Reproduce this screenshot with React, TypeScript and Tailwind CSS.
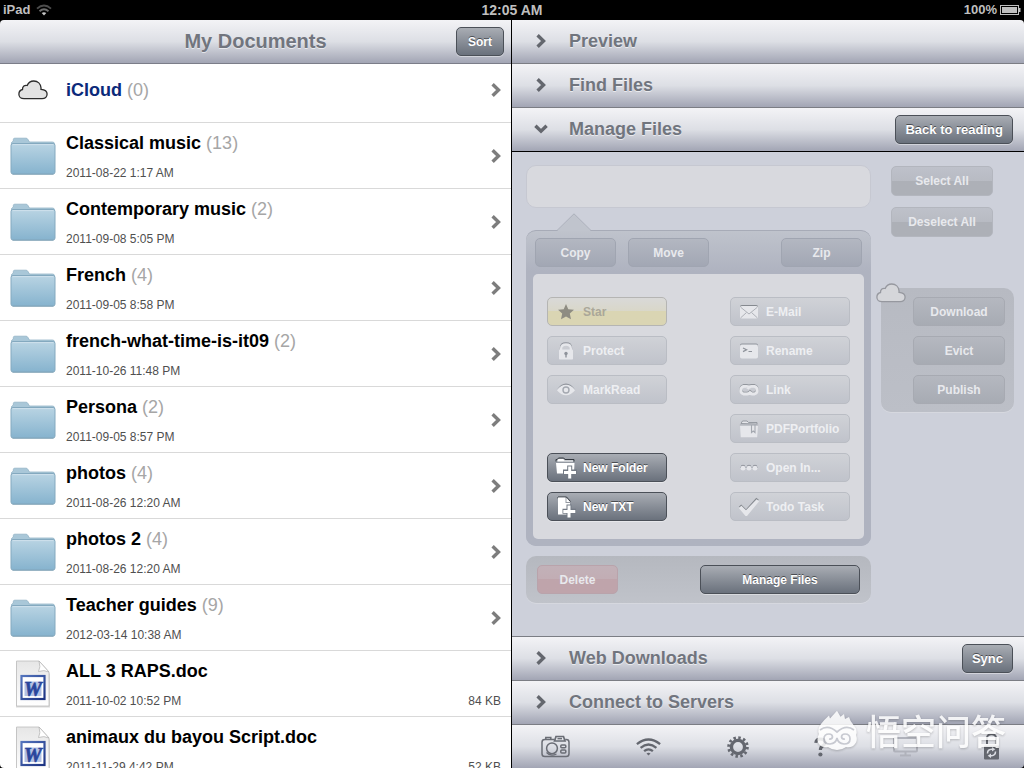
import type { ReactNode } from 'react';
import clsx from 'clsx';

type Entry = {
  name: string;
  date: string;
  count?: number;
  size?: string;
};

const entries: Entry[] = [
  { name: 'Classical music', count: 13, date: '2011-08-22 1:17 AM' },
  { name: 'Contemporary music', count: 2, date: '2011-09-08 5:05 PM' },
  { name: 'French', count: 4, date: '2011-09-05 8:58 PM' },
  { name: 'french-what-time-is-it09', count: 2, date: '2011-10-26 11:48 PM' },
  { name: 'Persona', count: 2, date: '2011-09-05 8:57 PM' },
  { name: 'photos', count: 4, date: '2011-08-26 12:20 AM' },
  { name: 'photos 2', count: 4, date: '2011-08-26 12:20 AM' },
  { name: 'Teacher guides', count: 9, date: '2012-03-14 10:38 AM' },
  { name: 'ALL 3 RAPS.doc', size: '84 KB', date: '2011-10-02 10:52 PM' },
  { name: 'animaux du bayou Script.doc', size: '52 KB', date: '2011-11-29 4:42 PM' },
];

const barBg = 'bg-linear-to-b from-[#f3f3f6] via-[#dddfe5] via-50% to-[#a2a5b4]';
const darkBtn =
  'rounded-[5px] border border-[#4b5058] bg-linear-to-b from-[#a9adb4] to-[#6a717c] font-bold text-white shadow-[0_1px_0_rgba(255,255,255,0.4)] [text-shadow:0_-1px_0_rgba(0,0,0,0.5)]';

/* ---------- icons ---------- */

function ChevronRight({ className }: { className?: string }) {
  return (
    <svg viewBox="0 0 10 14" className={clsx('h-3.5 w-2.5 shrink-0', className)} fill="none" stroke="currentColor" strokeWidth="3.4">
      <path d="M1.600 1.300 7.500 7l-5.900 5.700" />
    </svg>
  );
}

function ChevronDown() {
  return (
    <svg viewBox="0 0 14 10" className="h-2.5 w-3.5 shrink-0" fill="none" stroke="currentColor" strokeWidth="3.4">
      <path d="M1.4 1.8 7 7.2l5.6-5.4" />
    </svg>
  );
}

function Cloud({ className, stroke, fill }: { className: string; stroke: string; fill: string }) {
  return (
    <svg viewBox="0 0 30 20" className={className}>
      <path
        d="M6 18.7C3 18.7.9 16.8.9 14.2c0-2.400 1.500-4.200 3.600-4.700C4.300 6.500 6.700 4.700 9.200 5.500 10.300 2.800 12.800 1 15.800 1c4 0 6.900 2.900 7.200 6.800.1.600 0 1.100 0 1.500 3.400.2 6.100 1.900 6.100 4.800 0 2.700-2.100 4.600-5 4.600Z"
        fill={fill}
        stroke={stroke}
        strokeWidth="1.3"
      />
    </svg>
  );
}

function FolderIcon() {
  return (
    <svg viewBox="0 0 46 38" className="h-[38px] w-[46px]">
      <defs>
        <linearGradient id="folderFront" x1="0" y1="0" x2="0" y2="1">
          <stop offset="0" stopColor="#b9d4e3" />
          <stop offset="1" stopColor="#86b3ce" />
        </linearGradient>
      </defs>
      <path d="M1.500 9V5.500L3.300 4V2.600Q3.300 1.200 4.800 1.200H16q1.200 0 1.700.9L19.500 5H42.500q2 0 2 2v2Z" fill="#a9c7d8" stroke="#93b4c7" strokeWidth=".8" />
      <path d="M1 8.500Q1 6.500 3 6.500H43q2 0 2 2V35q0 2-2 2H3Q1 37 1 35Z" fill="url(#folderFront)" stroke="#84a9bf" strokeWidth="1" />
      <path d="M2.500 7.600h41" stroke="#cfe1ec" strokeWidth="1" />
      <path d="M2.500 37.400h41" stroke="#7497ab" strokeWidth=".6" />
    </svg>
  );
}

function WordIcon() {
  return (
    <svg viewBox="0 0 38 50" className="h-[50px] w-[38px]">
      <defs>
        <linearGradient id="page" x1="0" y1="0" x2="0" y2="1">
          <stop offset="0" stopColor="#e6e6e6" />
          <stop offset="1" stopColor="#ffffff" />
        </linearGradient>
        <linearGradient id="wordBox" x1="0" y1="0" x2="1" y2="1">
          <stop offset="0" stopColor="#5474bd" />
          <stop offset="1" stopColor="#1c3382" />
        </linearGradient>
      </defs>
      <path d="M2 3.500H26l10 11.500V48.500H2Z" fill="#d9d9d9" />
      <path d="M2.500 2H25l10 11v34H2.500Z" fill="url(#page)" stroke="#bdbdbd" strokeWidth=".8" />
      <path d="M25 2q2 6-.5 10.500Q30 10.500 35 13Z" fill="#fff" stroke="#b0b0b0" strokeWidth=".7" />
      <rect x="7.500" y="17" width="23" height="23" fill="#fff" stroke="url(#wordBox)" strokeWidth="2.200" />
      <path d="M10.500 22.500h17v14.500h-17Z" fill="#b3c1e3" />
      <text x="19" y="36.500" textAnchor="middle" fontFamily="Liberation Serif, serif" fontSize="20" fontWeight="700" fontStyle="italic" fill="#2a469c" stroke="#2a469c" strokeWidth=".7">
        W
      </text>
    </svg>
  );
}

function StarIcon() {
  return (
    <svg viewBox="0 0 20 20" className="size-5" fill="#8e8c82">
      <path d="m10 2 2.300 5.200 5.700.6-4.200 3.800 1.200 5.600L10 14.400l-5 2.800 1.200-5.600L2 7.800l5.700-.6Z" />
    </svg>
  );
}

function LockIcon() {
  return (
    <svg viewBox="0 0 20 20" className="size-5">
      <path d="M5 9V6.500Q5 2.300 10 2.300t5 4.200V9" fill="none" stroke="#8f939b" strokeWidth="2.200" />
      <path d="M5.200 9.500V7.500Q5.200 3.500 10 3.500t4.800 4v2" fill="none" stroke="#e6e7eb" strokeWidth="2.400" />
      <rect x="3" y="8.500" width="14" height="10" rx=".8" fill="#e6e7eb" />
      <circle cx="10" cy="12.500" r="1.700" fill="#8f939b" />
      <path d="M9.300 13h1.400v3.500H9.300Z" fill="#8f939b" />
    </svg>
  );
}

function EyeIcon() {
  return (
    <svg viewBox="0 0 20 20" className="size-5">
      <path d="M.8 10Q5 3.600 10 3.600T19.200 10Q15 5.400 10 5.400T.8 10Z" fill="#8f939b" />
      <path d="M1 10.200Q5 4.800 10 4.800t9 5.400Q15 15.200 10 15.200T1 10.200Z" fill="#e6e7eb" />
      <circle cx="10" cy="10" r="3" fill="none" stroke="#a4a8b0" strokeWidth="1.400" />
    </svg>
  );
}

function NewFolderIcon() {
  return (
    <svg viewBox="0 0 22 22" className="size-[22px]">
      <path d="M1 4.500V2.500h1.200L3.500 1h5.200L10 2.500h9v2" fill="none" stroke="#33383f" strokeWidth="1" />
      <path d="M2.500 4.500V3l1-1h4.800l1.200 1.400H18v1.100Z" fill="#fff" />
      <path d="M1 6h18.500l-.5 10.500H2Z" fill="#fff" />
      <path d="M14.700 8.500V22M8 15h14" stroke="#737a84" strokeWidth="5" />
      <path d="M14.700 9.500v12M9 15.500h12" stroke="#fff" strokeWidth="3" />
    </svg>
  );
}

function NewFileIcon() {
  return (
    <svg viewBox="0 0 22 22" className="size-[22px]">
      <path d="M3 2.500V1h8.500l4 4.500" fill="none" stroke="#33383f" strokeWidth="1" />
      <path d="M3 1.600h7.500V7H15v11.500H3Z" fill="#fff" />
      <path d="m11.500 2 3.700 4h-3.700Z" fill="#fff" />
      <path d="M14 8.500V22M7.500 15.200H21" stroke="#737a84" strokeWidth="5" />
      <path d="M14 9.500v12M8.300 15.500h12" stroke="#fff" strokeWidth="3" />
    </svg>
  );
}

function MailIcon() {
  return (
    <svg viewBox="0 0 20 20" className="size-5">
      <rect x="1" y="3" width="18" height="13" rx="1.800" fill="#85898f" />
      <rect x="1" y="4" width="18" height="12.500" rx="1.800" fill="#e6e7eb" />
      <path d="m2 5.500 8 6.500 8-6.500M2 15.500l5.500-5M18 15.500l-5.500-5" fill="none" stroke="#aeb1b8" strokeWidth="1" />
    </svg>
  );
}

function RenameIcon() {
  return (
    <svg viewBox="0 0 20 20" className="size-5">
      <rect x="1" y="2.500" width="18" height="14" rx="1.800" fill="#8f939b" />
      <rect x="1" y="3.600" width="18" height="14" rx="1.800" fill="#e6e7eb" />
      <path d="m4 7 3.600 1.800L4 10.600M9.500 10.500h3.500" fill="none" stroke="#8f939b" strokeWidth="1.200" />
    </svg>
  );
}

function LinkIcon() {
  const chain =
    'M13 11.500q-1.500 2.500-4 2.500H5.500a4 4 0 0 1 0-7.600h3q2.500 0 3 2.200M9.500 9q1.300-2.600 4-2.600h3a4 4 0 0 1 0 7.600h-2.300q-2.200 0-3-2.200';
  return (
    <svg viewBox="0 0 22 20" className="h-5 w-[22px]" fill="none">
      <path d={chain} transform="translate(0 -1)" stroke="#92969d" strokeWidth="2.600" />
      <path d={chain} stroke="#e6e7eb" strokeWidth="2.800" />
    </svg>
  );
}

function PortfolioIcon() {
  return (
    <svg viewBox="0 0 20 20" className="size-5">
      <path d="M2 4.500 3.500 2H8l1.500 1.500H18V5Z" fill="#e6e7eb" stroke="#8f939b" strokeWidth=".9" />
      <path d="M1 6.200h18l-.8 12H1.800Z" fill="#e6e7eb" />
      <path d="M.8 6h18.400" stroke="#a4a8b0" strokeWidth="1" />
      <path d="M12.500 6v7.500l1.700-1.500 1.800 1.500V6" fill="none" stroke="#a4a8b0" strokeWidth="1.100" />
    </svg>
  );
}

function DotsIcon() {
  return (
    <svg viewBox="0 0 20 20" className="size-5">
      {[4, 10, 16].map((x) => (
        <g key={x}>
          <circle cx={x} cy="9.200" r="2.400" fill="#8f939b" />
          <circle cx={x} cy="10.200" r="2.400" fill="#e6e7eb" />
        </g>
      ))}
    </svg>
  );
}

function CheckIcon() {
  return (
    <svg viewBox="0 0 22 20" className="h-5 w-[22px]">
      <path d="M.8 9.800 3.200 7.600 8 12.300 18.300.8l2.500 2L8.500 17.500Z" fill="#85898f" />
      <path d="M.8 11 3.400 8.800 8 13.300 18.600 2.200l2.600 2L9 19H7.500Z" fill="#e6e7eb" />
    </svg>
  );
}

function StatusWifi() {
  return (
    <svg viewBox="0 0 16 12" className="h-3 w-4" fill="none" strokeWidth="1.900">
      <path d="M1 4.600Q8-1.800 15 4.600" stroke="#4d4d4d" />
      <path d="M3.500 7.200Q8 3.200 12.500 7.200" stroke="#6e6e6e" />
      <path d="m8 11.500-2.300-2.400q2.300-1.800 4.600 0Z" fill="#c8c8c8" />
    </svg>
  );
}

function CameraIcon() {
  return (
    <svg viewBox="0 0 29 23" className="h-[23px] w-[29px]" fill="none" stroke="#6a6d75" strokeWidth="1.500">
      <path d="M4.800 4.500V2.500h5v2" />
      <path d="M13.500 4.500H3.800Q1 4.500 1 7.200v11.500q0 2.800 2.800 2.800h21.400q2.800 0 2.800-2.800V7.200q0-2.700-2.800-2.700h-1" />
      <path d="m13.500 6 1.500-4.500h7.500L24 6Z" strokeWidth="1.700" />
      <path d="M16.500 3.600h4.500" />
      <circle cx="11" cy="13.300" r="5.400" />
      <path d="M5.500 17.500q4 4.500 10 1.500" strokeWidth="1.200" />
      <rect x="19.800" y="10" width="5" height="2.800" rx="1" />
      <rect x="19.800" y="15" width="5" height="3" rx="1" />
    </svg>
  );
}

function WifiIcon() {
  return (
    <svg viewBox="0 0 25 18" className="h-[18px] w-[25px]" fill="none" stroke="#64676f" strokeWidth="2.300">
      <path d="M.9 6.200Q12.500-3.200 24.100 6.200" />
      <path d="M4.600 9.800q7.900-6.600 15.800 0" />
      <path d="M8.100 13.200q4.400-3.600 8.800 0" />
      <path d="m12.500 17.500-2-1.900q2-1.500 4 0Z" fill="#64676f" stroke="none" />
    </svg>
  );
}

function GearIcon() {
  return (
    <svg viewBox="0 0 22 22" className="size-[22px]" fill="none" stroke="#64676f">
      <circle cx="11" cy="11" r="6.600" strokeWidth="3.400" />
      <circle cx="11" cy="11" r="9.400" strokeWidth="2.800" strokeDasharray="2.500 2.422" />
    </svg>
  );
}

function HelpIcon() {
  return (
    <svg viewBox="0 0 13 20" className="h-5 w-[13px]">
      <path d="M1.800 5.800Q2.200 2 6.500 2t4.600 3.500q0 2-2.500 3.500Q6.400 10.200 6.400 13" fill="none" stroke="#64676f" strokeWidth="3.200" />
      <circle cx="6.400" cy="17.500" r="2.100" fill="#64676f" />
    </svg>
  );
}

function MonitorIcon() {
  return (
    <svg viewBox="0 0 25 21" className="h-[21px] w-[25px]" fill="none" stroke="#b0b2bb" strokeWidth="2">
      <rect x="1" y="2" width="23" height="13.500" rx="1" />
      <path d="M12.500 15.500v3.500M7 19.500h11" />
    </svg>
  );
}

function SyncLockIcon() {
  return (
    <svg viewBox="0 0 15 27" className="h-[27px] w-[15px]" fill="none">
      <path d="M3 11V5q0-3.800 4.500-3.800T12 5v6" stroke="#64676f" strokeWidth="2" />
      <rect y="12.500" width="15" height="14" rx="1" fill="#64676f" />
      <path d="M3.500 20.500q0-4 4-4.200h1M11.500 18.500q0 4-4 4.200h-1" stroke="#dcdee4" strokeWidth="1.500" />
      <path d="m8 14 3.300 2.300L8 18.600ZM7 20.400l-3.300 2.300L7 25Z" fill="#dcdee4" />
    </svg>
  );
}

/* ---------- pieces ---------- */

type BarProps = { title: string; open?: boolean; children?: ReactNode; className?: string };

function SectionBar({ title, open, children, className }: BarProps) {
  return (
    <div className={clsx('flex h-11 shrink-0 items-center pr-[11px]', barBg, className)}>
      <button
        type="button"
        aria-expanded={!!open}
        className="flex flex-1 items-center gap-[21px] pb-0.5 pl-[22px] text-left text-[18px] leading-6 font-bold text-[#71757e] [text-shadow:0_1px_0_rgba(255,255,255,0.6)]"
      >
        <span className="flex w-3.5 justify-center text-[#64676e]">{open ? <ChevronDown /> : <ChevronRight />}</span>
        {title}
      </button>
      {children}
    </div>
  );
}

function ToolButton({ icon, label, active }: { icon: ReactNode; label: string; active?: boolean }) {
  return (
    <button
      type="button"
      disabled={!active}
      className={clsx(
        'flex h-[29px] w-[120px] items-center gap-1.5 pl-[7px] text-xs',
        active
          ? darkBtn
          : 'rounded-[5px] border border-[#babdc4] bg-linear-to-b from-[#d0d2d7] to-[#c0c3cb] font-bold text-[#eeeff2]'
      )}
    >
      <span className="flex w-[22px] justify-center">{icon}</span>
      {label}
    </button>
  );
}

function FadedButton({ label, className }: { label: string; className: string }) {
  return (
    <button type="button" disabled className={clsx('rounded-[5px] border text-xs font-bold text-[#e8e9ed]', className)}>
      {label}
    </button>
  );
}

const slate = 'h-[29px] w-[81px] border-[#a0a5b1] bg-linear-to-b from-[#b3b7c1] to-[#a2a7b4]';
const grey = 'h-[30px] w-[102px] border-[#b3b6be] bg-linear-to-b from-[#bec1ca] from-0% via-[#b8bbc3] via-50% to-[#adb0b7] to-50%';
const cloudBtn = 'h-[29px] w-full border-[#a7aab2] bg-linear-to-b from-[#b5b8c0] to-[#a7abb3]';

function FileList() {
  return (
    <ul className="min-h-0 flex-1 overflow-hidden bg-white">
      <li className="border-b border-[#d9d9d9]">
        <a href="#icloud" className="flex h-[58px] items-center gap-2.5 pr-2.5 pb-1.5 pl-2.5">
          <span className="flex w-[46px] justify-center">
            <Cloud className="h-5 w-[30px]" stroke="#2b2b2b" fill="#e2e2e2" />
          </span>
          <span className="flex-1 text-[18px] leading-6 font-bold text-[#0b2a7a]">
            iCloud <span className="font-normal text-[#a6a6a6]">(0)</span>
          </span>
          <ChevronRight className="text-[#7d7d7d]" />
        </a>
      </li>
      {entries.map((entry) => (
        <li key={entry.name} className="border-b border-[#d9d9d9]">
          <a href="#open" className="flex h-[65px] items-center gap-2.5 pr-2.5 pl-2.5">
            <span className="flex w-[46px] justify-center">{entry.size ? <WordIcon /> : <FolderIcon />}</span>
            <span className="flex-1">
              <span className="block text-[18px] leading-6 font-bold text-black">
                {entry.name} {entry.count && <span className="font-normal text-[#a6a6a6]">({entry.count})</span>}
              </span>
              <span className="mt-2.5 flex justify-between text-xs text-[#4f4f4f]">
                <span>{entry.date}</span>
                {entry.size && <span>{entry.size}</span>}
              </span>
            </span>
            {!entry.size && <ChevronRight className="text-[#7d7d7d]" />}
          </a>
        </li>
      ))}
    </ul>
  );
}

function ManagePanel() {
  return (
    <div className="flex min-h-0 flex-1 gap-2.5 overflow-hidden bg-[#cdd0da] pt-[13px] pr-2.5 pl-3.5">
      <div className="flex-1">
        <input
          type="text"
          aria-label="File name"
          disabled
          className="block h-[43px] w-full rounded-[10px] border border-[#c6c8d1] bg-[#d8d9de] px-3"
        />

        <div className="relative mt-[22px] rounded-[10px] border-t border-[#a7abb7] bg-[#afb3c0] bg-linear-to-b from-[#bfc3cc] to-[#afb3c0] to-[40px] px-[7px] pt-[7px] pb-[7px]">
          <svg viewBox="0 0 36 18" className="absolute -top-[18px] left-[30px] h-[18px] w-9">
            <path d="M1 18 18 1l17 17Z" fill="#c0c4cd" />
            <path d="M1 17.500 18 .8l17 16.700" fill="none" stroke="#abafba" />
          </svg>
          <div className="flex gap-3 px-0.5">
            <FadedButton label="Copy" className={slate} />
            <FadedButton label="Move" className={slate} />
            <FadedButton label="Zip" className={clsx('ml-auto', slate)} />
          </div>
          <div className="mt-[7px] flex justify-between rounded-[5px] bg-[#d8d9de] px-3.5 pt-[23px] pb-[18px]">
            <div className="flex flex-col gap-2.5">
              <button
                type="button"
                disabled
                className="flex h-[29px] w-[120px] items-center gap-1.5 rounded-[5px] border border-[#b5b5b3] bg-linear-to-b from-[#d9d9d8] from-0% via-[#d9d7c8] via-50% to-[#dad5b3] to-50% pl-[7px] text-xs font-bold text-[#aaa799]"
              >
                <span className="flex w-[22px] justify-center">
                  <StarIcon />
                </span>
                Star
              </button>
              <ToolButton icon={<LockIcon />} label="Protect" />
              <ToolButton icon={<EyeIcon />} label="MarkRead" />
              <div className="mt-auto flex flex-col gap-2.5">
                <ToolButton icon={<NewFolderIcon />} label="New Folder" active />
                <ToolButton icon={<NewFileIcon />} label="New TXT" active />
              </div>
            </div>
            <div className="flex flex-col gap-2.5">
              <ToolButton icon={<MailIcon />} label="E-Mail" />
              <ToolButton icon={<RenameIcon />} label="Rename" />
              <ToolButton icon={<LinkIcon />} label="Link" />
              <ToolButton icon={<PortfolioIcon />} label="PDFPortfolio" />
              <ToolButton icon={<DotsIcon />} label="Open In..." />
              <ToolButton icon={<CheckIcon />} label="Todo Task" />
            </div>
          </div>
        </div>

        <div className="mt-2.5 flex justify-between rounded-[10px] bg-linear-to-b from-[#b5b8bf] to-[#c0c3ca] px-[11px] py-[9px] shadow-[0_1px_0_#d6d8df]">
          <FadedButton
            label="Delete"
            className="h-[29px] w-[81px] border-[#b9a3ab] bg-linear-to-b from-[#c2b1b8] from-0% via-[#c2adb4] via-50% to-[#bfa4ab] to-50%"
          />
          <button type="button" className={clsx('h-[29px] w-40 text-xs', darkBtn)}>
            Manage Files
          </button>
        </div>
      </div>

      <div className="w-[133px] pt-px">
        <div className="flex flex-col gap-[11px] pl-2.5">
          <FadedButton label="Select All" className={grey} />
          <FadedButton label="Deselect All" className={grey} />
        </div>
        <div className="relative mt-[51px] flex flex-col gap-2.5 rounded-[10px] bg-linear-to-b from-[#b7bac2] to-[#bcbfc7] pt-[9px] pr-[9px] pb-2 pl-8 shadow-[0_1px_0_#d6d8df]">
          <Cloud className="absolute -top-[5px] -left-[5px] h-5 w-[30px]" stroke="#96989f" fill="#d5d6da" />
          <FadedButton label="Download" className={cloudBtn} />
          <FadedButton label="Evict" className={cloudBtn} />
          <FadedButton label="Publish" className={cloudBtn} />
        </div>
      </div>
    </div>
  );
}

const tools = [
  { label: 'Camera', icon: <CameraIcon /> },
  { label: 'Wi-Fi transfer', icon: <WifiIcon /> },
  { label: 'Settings', icon: <GearIcon /> },
  { label: 'Help', icon: <HelpIcon /> },
  { label: 'Display', icon: <MonitorIcon /> },
  { label: 'Lock', icon: <SyncLockIcon /> },
];

function Watermark() {
  return (
    <div className="pointer-events-none absolute right-[18px] bottom-[18px] flex items-center gap-2 text-white opacity-85 drop-shadow-[0_1px_1px_rgba(0,0,0,0.25)]">
      <svg viewBox="0 0 42 40" className="h-10 w-[42px]">
        <path
          d="M3 24Q1 19 5 14q3-4 8-8.500l1 3L21 .8l3.500 6L28 4l1 5 4-2q1 4 4.500 8Q42 20 40 25q2 6-1 9-3 4-9 3-4 3-9 3t-9-3q-6 1-9-3-3-4 0-10Z"
          fill="currentColor"
        />
        <path
          d="M13 29q3 .5 3.500-2 0-3-3.500-3-5 0-5 5t6 5q6-.5 7-6 1 5.500 7 6 6 0 6-5t-5-5q-3.500 0-3.500 3 .5 2.500 3.500 2M4 20q8-6 17 2 9-8 17-2"
          fill="none"
          stroke="#c3c5cd"
          strokeWidth="1.700"
        />
      </svg>
      <span className="font-['Noto_Sans_CJK_SC',sans-serif] text-[35px] leading-10 font-medium">悟空问答</span>
    </div>
  );
}

export default function App() {
  return (
    <div className="relative flex h-screen flex-col overflow-hidden bg-black font-['Liberation_Sans','Noto_Sans_CJK_SC',sans-serif]">
      {/* status bar */}
      <div className="grid h-5 shrink-0 grid-cols-3 items-center px-[3px] text-[13px] leading-4 font-bold text-[#bfbfbf]">
        <div className="flex items-center gap-1.5">
          iPad <StatusWifi />
        </div>
        <div className="text-center text-sm leading-4">12:05 AM</div>
        <div className="flex items-center justify-end gap-[3px]">
          100%
          <svg viewBox="0 0 21 10" className="h-2.5 w-[21px]">
            <rect x=".5" y=".5" width="18" height="9" fill="none" stroke="#bfbfbf" />
            <rect x="2" y="2" width="15" height="6" fill="#bfbfbf" />
            <path d="M19 3h1.500v4H19Z" fill="#bfbfbf" />
          </svg>
        </div>
      </div>

      <div className="grid min-h-0 flex-1 grid-cols-2 overflow-hidden rounded-[4px]">
        {/* documents */}
        <section className="flex min-h-0 flex-col border-r border-black">
          <header className={clsx('flex h-11 shrink-0 items-center border-b border-[#7b7d89] px-[7px]', barBg)}>
            <div className="flex-1" />
            <h1 className="pb-0.5 text-xl font-bold text-[#71757e] [text-shadow:0_1px_0_rgba(255,255,255,0.6)]">My Documents</h1>
            <div className="flex flex-1 justify-end">
              <button type="button" className={clsx('h-[29px] px-[11px] text-xs', darkBtn)}>
                Sort
              </button>
            </div>
          </header>
          <FileList />
        </section>

        {/* tools */}
        <section className="flex min-h-0 flex-col">
          <SectionBar title="Preview" className="border-b border-[#7b7d84]" />
          <SectionBar title="Find Files" className="border-b border-[#7b7d84]" />
          <SectionBar title="Manage Files" open className="border-b border-black">
            <button type="button" className={clsx('h-[29px] px-[9px] text-[13px]', darkBtn)}>
              Back to reading
            </button>
          </SectionBar>
          <ManagePanel />
          <SectionBar title="Web Downloads" className="border-t border-[#7b7d84]">
            <button type="button" className={clsx('h-[29px] px-[9px] text-[13px]', darkBtn)}>
              Sync
            </button>
          </SectionBar>
          <SectionBar title="Connect to Servers" className="border-t border-[#7b7d84]" />
          <nav className={clsx('flex h-11 shrink-0 items-center justify-between border-t border-[#7b7d84] pr-[25px] pl-[29px]', barBg)}>
            {tools.map((tool) => (
              <button key={tool.label} type="button" aria-label={tool.label}>
                {tool.icon}
              </button>
            ))}
          </nav>
        </section>
      </div>

      <Watermark />
    </div>
  );
}
